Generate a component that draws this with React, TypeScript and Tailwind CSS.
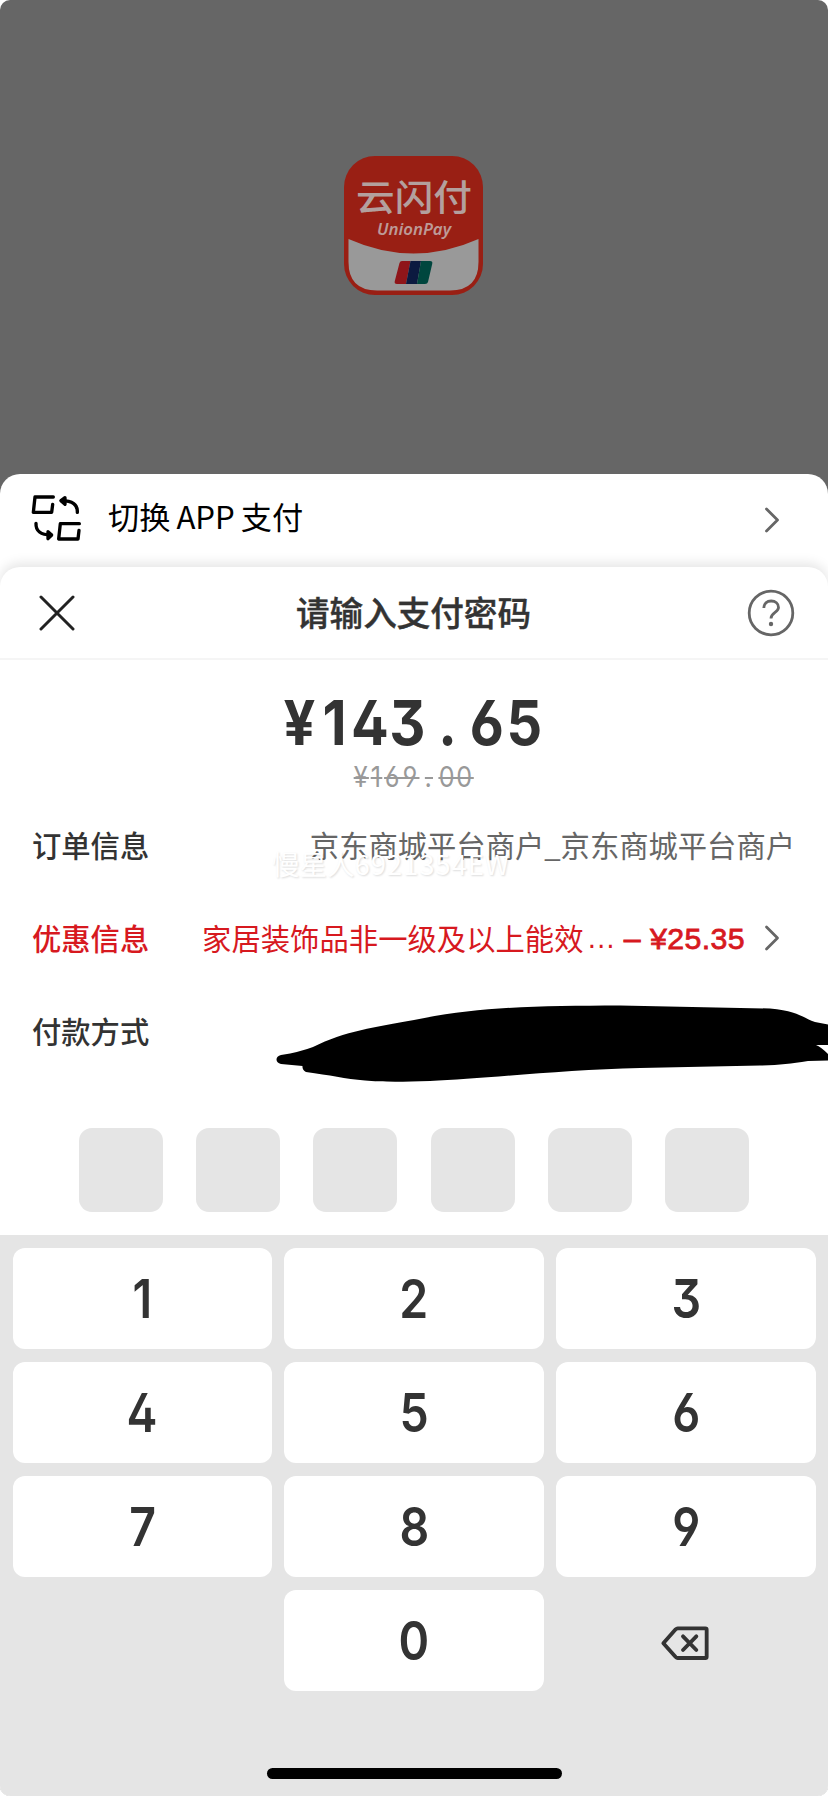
import type { ReactNode } from 'react';

const CJK = "font-['Noto_Sans_CJK_SC',sans-serif]";
const DIGITS = "font-['Inter',sans-serif]";

const keys = ['1', '2', '3', '4', '5', '6', '7', '8', '9', '', '0', 'del'];

function ChevronRight() {
  return (
    <svg className="mt-[2px] h-[26px] w-4 shrink-0" viewBox="0 0 16 26" fill="none" stroke="#666" strokeWidth="2.8" strokeLinecap="round" strokeLinejoin="round">
      <path d="M2.5 2 L13.5 13 L2.5 24" />
    </svg>
  );
}

function SwitchIcon() {
  return (
    <svg className="mt-[2px] h-12 w-[50px] shrink-0" viewBox="93 102 150 144" fill="none" stroke="#000" strokeWidth="10" strokeLinecap="round" strokeLinejoin="round">
      <path d="M160 111 H105 L100 157 H155 L158 133" />
      <path d="M238 191 H181 L176 237 H234 L237 211" />
      <path d="M232 157 C233 134 218 122 184 122" />
      <path d="M195 113 L183 122 L195 133 Z" fill="#000" />
      <path d="M108 190 C107 213 122 225 153 225" />
      <path d="M144 215 L155 225 L144 236 Z" fill="#000" />
    </svg>
  );
}

function CloseIcon() {
  return (
    <svg className="mt-[1px] h-9 w-9" viewBox="0 0 36 36" fill="none" stroke="#222" strokeWidth="3" strokeLinecap="round">
      <path d="M2 2 L34 34 M34 2 L2 34" />
    </svg>
  );
}

function HelpIcon() {
  return (
    <svg className="mt-[1px] h-12 w-12" viewBox="0 0 48 48" fill="none" stroke="#666" strokeWidth="2.8" strokeLinecap="butt">
      <circle cx="24" cy="24" r="21.8" />
      <path d="M16.8 19 C16.8 14.6 20 12 24.2 12 C28.4 12 31.5 14.7 31.5 18.5 C31.5 23.5 24 23.4 24 29.5" />
      <circle cx="24" cy="35" r="2.2" fill="#666" stroke="none" />
    </svg>
  );
}

function BackspaceIcon() {
  return (
    <svg className="mt-[4px] mr-[2px] h-[36px] w-[50px]" viewBox="738 432 150 108" fill="none" stroke="#333" strokeWidth="11.5" strokeLinecap="round" strokeLinejoin="round">
      <path d="M791 442 H874 Q878 442 878 446 V527 Q878 531 874 531 H791 Q788 531 785 528 L748 487 L785 445 Q788 442 791 442 Z" />
      <path d="M807 466 L847 507 M847 466 L807 507" />
    </svg>
  );
}

function Logo() {
  return (
    <svg className="mr-[2px] h-[139px] w-[139px]" viewBox="0 0 139 139">
      <rect width="139" height="139" rx="31" fill="#991f14" />
      <path d="M4.500 83 Q69.500 112 134.500 83 V106 Q134.500 134.500 106 134.500 H33 Q4.500 134.500 4.500 106 Z" fill="#999" />
      <text x="70" y="54.5" textAnchor="middle" fontSize="36" fontWeight="500" fill="#b3a09e" className="font-['Noto_Sans_CJK_SC',sans-serif]" textLength="116" lengthAdjust="spacingAndGlyphs">云闪付</text>
      <text x="70" y="79" textAnchor="middle" fontSize="15.5" fontWeight="600" fontStyle="italic" fill="#bd9a97" className="font-['Noto_Sans',sans-serif]" textLength="74" lengthAdjust="spacingAndGlyphs">UnionPay</text>
      <path d="M58 105 H66.500 L62 128 H53 Q50 128 50.800 125 L55.500 107 Q56 105 58 105 Z" fill="#8f1519" />
      <path d="M66.500 105 H77 L73 128 H62 Z" fill="#0c1a40" />
      <path d="M77 105 H86 Q89 105 88.200 108 L84 126 Q83.500 128 81 128 H73 Z" fill="#00463e" />
    </svg>
  );
}

function InfoRow({ label, red, children }: { label: string; red?: boolean; children?: ReactNode }) {
  return (
    <div className={`flex h-[93px] items-center justify-between pr-[33px] pb-[4px] pl-[32px] text-[29.3px] ${red ? 'text-[#d7191f]' : 'text-[#666]'}`}>
      <span className={`font-medium ${red ? '' : 'text-[#333]'}`}>{label}</span>
      {children}
    </div>
  );
}

export default function App() {
  return (
    <div className="bg-white">
      <div className={`flex h-[1796px] w-[828px] flex-col overflow-hidden rounded-[10px] bg-[#666] leading-none whitespace-nowrap ${CJK}`}>
        <div className="flex h-[474px] shrink-0 justify-center pt-[156px]">
          <Logo />
        </div>

        <div className="flex flex-1 flex-col rounded-t-[20px] bg-white">
          {/* switch app row */}
          <div className="flex h-[93px] shrink-0 items-center pr-[48px] pb-[7px] pl-[31px]">
            <SwitchIcon />
            <div className="ml-[27px] flex flex-1 items-center gap-[6px] pb-[3px] text-[31.2px] text-black">
              <span>切换</span>
              <span>APP</span>
              <span>支付</span>
            </div>
            <div className="pt-1">
              <ChevronRight />
            </div>
          </div>

          {/* payment panel */}
          <div className="flex flex-1 flex-col rounded-t-[20px] bg-white shadow-[0_-4px_12px_rgba(0,0,0,0.1)]">
            <header className="flex h-[93px] shrink-0 items-center justify-between border-b-2 border-[#f5f5f5] pr-[33px] pl-[39px]">
              <CloseIcon />
              <h1 className="pr-[3px] pb-[1px] pl-[8px] text-[33.6px] font-medium text-[#333] [-webkit-text-stroke:0.4px]">请输入支付密码</h1>
              <HelpIcon />
            </header>

            <div className={`flex h-[140px] shrink-0 flex-col items-center pt-[32px] ${DIGITS}`}>
              <div className="scale-x-[0.9] text-[62px] font-bold tracking-[2px] text-[#333] [font-feature-settings:'tnum','cv09','ss01']">
                ¥<span className="pr-[4px] pl-[6px] [font-feature-settings:normal]">1</span>43<span className="px-[13.5px]">.</span>65
              </div>
              <div className="mt-[9px] scale-x-[0.9] text-[28px] font-normal tracking-[1.5px] text-[#999] line-through [font-feature-settings:'tnum','cv09','ss01'] [text-decoration-skip-ink:none]">
                ¥<span className="px-[2px] [font-feature-settings:normal]">1</span>69<span className="px-[6px]">.</span>00
              </div>
            </div>

            <div className="relative">
              <InfoRow label="订单信息">
                <span>京东商城平台商户_京东商城平台商户</span>
              </InfoRow>
              <InfoRow label="优惠信息" red>
                <div className="flex items-center pr-[15px]">
                  <span className="mr-[3px] tracking-[0.05px]">家居装饰品非一级及以上能效</span>
                  <span className="font-['Liberation_Sans',sans-serif]">…</span>
                  <span className="mt-[3px] mr-[19px] ml-[8px] font-['Liberation_Sans',sans-serif] text-[30.3px] tracking-[0.4px] [-webkit-text-stroke:0.8px]">– ¥25.35</span>
                  <ChevronRight />
                </div>
              </InfoRow>
              <InfoRow label="付款方式" />
              <div className="absolute top-[50px] left-[272px] text-[27.5px] text-white [text-shadow:1px_1px_2px_rgba(0,0,0,0.14)]">
                慢星人<span className="tracking-[0.9px]">6921354EW</span>
              </div>
              {/* scribble hiding the card number */}
              <svg className="absolute top-[200px] left-[270px] h-[90px] w-[558px]" viewBox="270 1000 558 90">
                <path d="M281 1055 Q300 1052 313 1047 C345 1031 375 1027 414 1020 C480 1006 540 1006 620 1005.500 L770 1008.500 C798 1011 803 1018 815 1022 L828 1024.500 V1045 H816 Q821 1047 828 1054 V1060.500 L808 1061 C790 1064 780 1065 760 1065.500 L640 1068 C560 1070 480 1079 430 1081 C400 1082 380 1082 365 1080.500 C345 1079 330 1075 306 1072 Q302 1070 302.500 1066 L281 1064 C275 1063 275 1056 281 1055 Z" fill="#000" />
              </svg>
            </div>

            <div className="mt-[49px] flex h-[84px] shrink-0 justify-between px-[79px]">
              {[0, 1, 2, 3, 4, 5].map((i) => (
                <div key={i} className="h-[84px] w-[84px] rounded-[13px] bg-[#e5e5e5]" />
              ))}
            </div>

            <div className="mt-[23px] flex flex-1 flex-col items-center bg-[#e5e5e5] px-[12.5px] pt-[13px]">
              <div className="grid w-full grid-cols-3 gap-x-[12.5px] gap-y-[13px]">
                {keys.map((key) => (
                  <button
                    key={key}
                    className={`flex h-[101px] items-center justify-center rounded-[12px] text-[54px] font-semibold text-[#333] [font-feature-settings:'cv09','ss01'] ${DIGITS} ${
                      key === '' || key === 'del' ? '' : 'bg-white'
                    }`}
                  >
                    {key === 'del' ? <BackspaceIcon /> : <span className="inline-block scale-x-[0.86]">{key}</span>}
                  </button>
                ))}
              </div>
              <div className="mt-[77px] h-[11px] w-[295px] rounded-full bg-black" />
            </div>
          </div>
        </div>
      </div>
    </div>
  );
}
